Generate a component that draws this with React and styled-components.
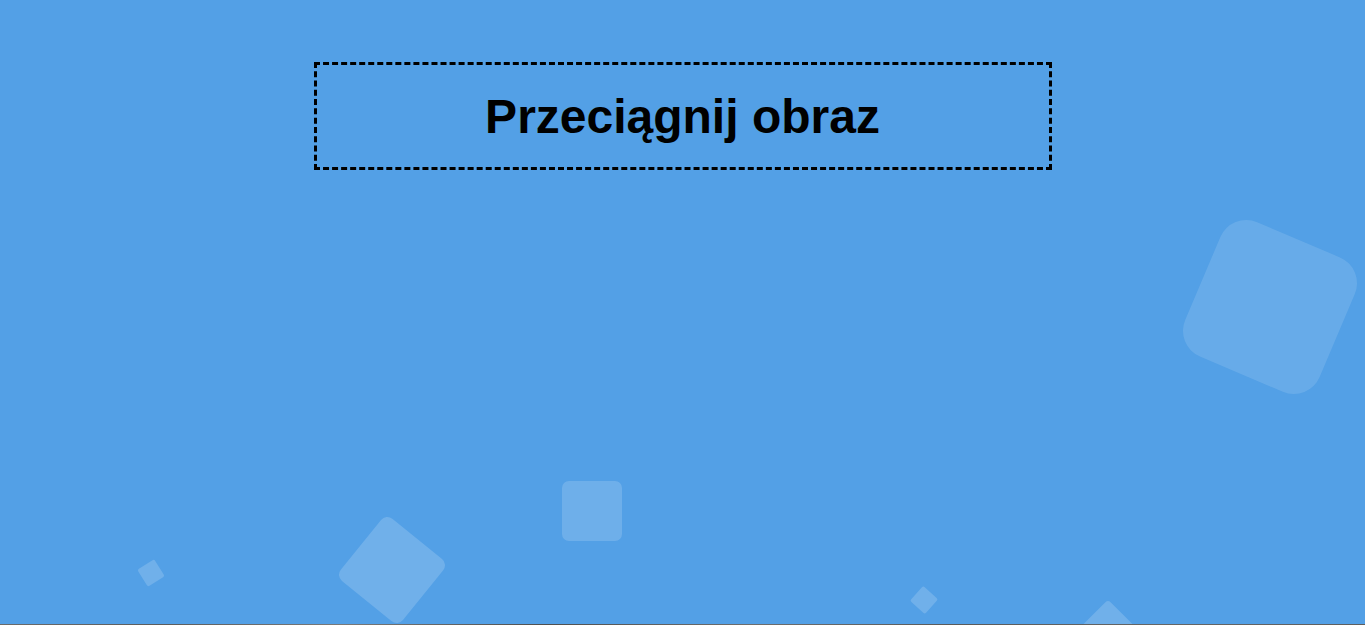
import React from 'react';
import styled, { createGlobalStyle } from 'styled-components';

const GlobalStyle = createGlobalStyle`
    html, body {
        margin: 0;
        padding: 0;
        overflow: hidden;
    }
    body {
        font-family: "Liberation Sans", Arial, sans-serif;
        background: #5a5a5a;
    }
`

const Stage = styled.section`
    position: relative;
    height: 624px;
    overflow: hidden;
    background: #53a0e6;
    display: flex;
    flex-direction: column;
    align-items: center;
    padding-top: 62px;
    box-sizing: border-box;
`

const DropZone = styled.div`
    position: relative;
    z-index: 1;
    width: 738px;
    box-sizing: border-box;
    border: 3px dashed #000;
    padding: 24px 0 23px;
    text-align: center;
`

const Title = styled.h1`
    margin: 0;
    font-size: 48px;
    font-weight: bold;
    line-height: 55px;
    color: #000;
`

const Floor = styled.div`
    height: 1px;
    background: linear-gradient(90deg, #6b6b6b 0%, #5c5c5c 12%, #7a7a7a 25%, #4f4f4f 40%, #6e6e6e 55%, #5a5a5a 70%, #666 85%, #5e5e5e 100%);
`

const Square = styled.span`
    position: absolute;
    display: block;
    width: ${p => p.size}px;
    height: ${p => p.size}px;
    left: ${p => p.cx - p.size / 2}px;
    top: ${p => p.cy - p.size / 2}px;
    border-radius: ${p => p.radius}px;
    transform: rotate(${p => p.angle}deg);
    background: rgba(255, 255, 255, ${p => p.alpha});
`

const squares = [
    { cx: 1270, cy: 307, size: 146, angle: 23, radius: 28, alpha: 0.12 },
    { cx: 392, cy: 570, size: 80, angle: 39, radius: 8, alpha: 0.17 },
    { cx: 151, cy: 573, size: 20, angle: 58, radius: 2, alpha: 0.17 },
    { cx: 592, cy: 511, size: 60, angle: 0, radius: 7, alpha: 0.16 },
    { cx: 924, cy: 600, size: 20, angle: 42, radius: 2, alpha: 0.17 },
    { cx: 1108, cy: 642, size: 60, angle: 45, radius: 4, alpha: 0.17 },
];

const App = () => (
    <>
        <GlobalStyle />
        <Stage>
            {squares.map((s, key) => (
                <Square key={key} {...s} />
            ))}
            <DropZone>
                <Title>Przeciągnij obraz</Title>
            </DropZone>
        </Stage>
        <Floor />
    </>
);

export default App;
